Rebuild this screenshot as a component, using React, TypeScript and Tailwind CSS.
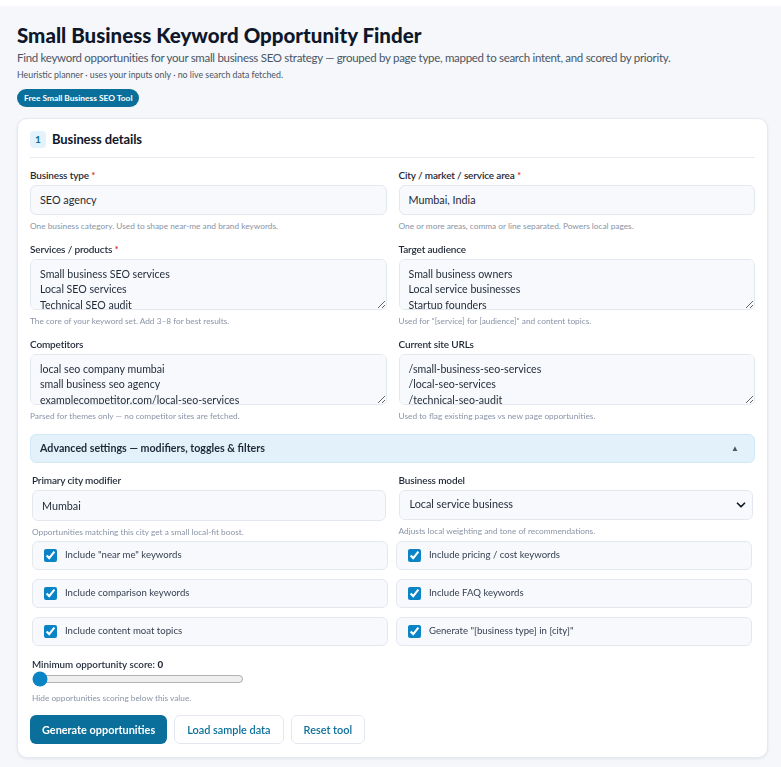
import { ChevronDown } from 'lucide-react'

const font = { fontFamily: 'Lato, "Noto Sans", Arial, sans-serif' }

function Label({ text, required }: { text: string; required?: boolean }) {
  return (
    <div className="text-[10px] font-semibold leading-[14px] tracking-[-0.15px] text-[#1f2937] mb-[3px]">
      {text}
      {required && <span className="text-[#dc2626]"> *</span>}
    </div>
  )
}

function Hint({ text }: { text: string }) {
  return <div className="text-[8.3px] leading-[12px] text-[#8a94a6] mt-[5px]">{text}</div>
}

function TextField({ label, value, hint, required }: { label: string; value: string; hint: string; required?: boolean }) {
  return (
    <div>
      <Label text={label} required={required} />
      <input
        readOnly
        value={value}
        className="w-full h-[30px] px-[9px] text-[10.8px] text-[#1f2937] bg-[#f7f9fc] border border-[#e3e8ef] rounded-[6px] outline-none"
      />
      <Hint text={hint} />
    </div>
  )
}

function Area({ label, lines, hint, required }: { label: string; lines: string[]; hint: string; required?: boolean }) {
  return (
    <div>
      <Label text={label} required={required} />
      <textarea
        readOnly
        value={lines.join('\n')}
        className="block w-full h-[51px] px-[9px] pt-[7px] text-[10.6px] leading-[15.5px] text-[#1f2937] bg-[#f7f9fc] border border-[#e3e8ef] rounded-[6px] outline-none overflow-y-scroll"
      />
      <Hint text={hint} />
    </div>
  )
}

function Check({ text }: { text: string }) {
  return (
    <label className="flex items-center h-[29px] px-[11px] bg-[#f7f9fc] border border-[#e3e8ef] rounded-[6px] gap-[8px]">
      <input type="checkbox" defaultChecked className="w-[13px] h-[13px] accent-[#0b84c6]" />
      <span className="text-[9.6px] text-[#374151]">{text}</span>
    </label>
  )
}

export default function App() {
  return (
    <div style={font} className="bg-white pt-[6px] min-h-[767px]">
      <div className="bg-[#f5f7fb] pl-[17px] pr-[13px] pt-[16px] pb-[10px] min-h-[761px]">
        <h1 className="text-[20.5px] font-black leading-[26px] text-[#0f172a]">
          Small Business Keyword Opportunity Finder
        </h1>
        <p className="text-[11.5px] leading-[17px] tracking-[-0.3px] text-[#4b5563] mt-[1px] whitespace-nowrap">
          Find keyword opportunities for your small business SEO strategy — grouped by page type, mapped to search intent, and scored by priority.
        </p>
        <p className="text-[8.8px] leading-[12px] text-[#4b5563] mt-[3px]">
          Heuristic planner · uses your inputs only · no live search data fetched.
        </p>
        <div className="mt-[8px] inline-flex items-center h-[18px] px-[7px] rounded-full bg-[#0b6f9b] text-white text-[8.4px] font-bold">
          Free Small Business SEO Tool
        </div>

        <div className="mt-[11px] bg-white border border-[#e5e9f0] rounded-[10px] shadow-[0_1px_3px_rgba(15,23,42,0.08)] px-[12px] pt-[11px] pb-[13px]">
          <div className="flex items-center gap-[6px] pb-[7px] border-b border-[#e5e9f0]">
            <span className="w-[16px] h-[17px] rounded-[4px] bg-[#e4f3fb] text-[#0b6f9b] text-[10px] font-bold flex items-center justify-center">1</span>
            <span className="text-[13px] font-bold tracking-[-0.1px] text-[#0f172a]">Business details</span>
          </div>

          <div className="grid grid-cols-2 gap-x-[12px] gap-y-[10px] mt-[10px]">
            <TextField label="Business type" required value="SEO agency" hint="One business category. Used to shape near-me and brand keywords." />
            <TextField label="City / market / service area" required value="Mumbai, India" hint="One or more areas, comma or line separated. Powers local pages." />
            <Area
              label="Services / products"
              required
              lines={['Small business SEO services', 'Local SEO services', 'Technical SEO audit', 'Content marketing', 'Google Business Profile optimization']}
              hint="The core of your keyword set. Add 3–8 for best results."
            />
            <Area
              label="Target audience"
              lines={['Small business owners', 'Local service businesses', 'Startup founders', 'Ecommerce stores']}
              hint={'Used for "[service] for [audience]" and content topics.'}
            />
            <Area
              label="Competitors"
              lines={['local seo company mumbai', 'small business seo agency', 'examplecompetitor.com/local-seo-services', 'seo consultant near me']}
              hint="Parsed for themes only — no competitor sites are fetched."
            />
            <Area
              label="Current site URLs"
              lines={['/small-business-seo-services', '/local-seo-services', '/technical-seo-audit', '/blog/local-seo-checklist']}
              hint="Used to flag existing pages vs new page opportunities."
            />
          </div>

          <div className="mt-[12px] h-[29px] flex items-center justify-between px-[9px] bg-[#e3f1fb] border border-[#d3e8f6] rounded-[6px]">
            <span className="text-[10.7px] font-bold text-[#1f2937]">Advanced settings — modifiers, toggles &amp; filters</span>
            <span className="text-[8px] text-[#4b5563] mr-[6px]">▲</span>
          </div>

          <div className="px-[2px] mt-[10px]">
            <div className="grid grid-cols-2 gap-x-[12px]">
              <div>
                <Label text="Primary city modifier" />
                <input
                  readOnly
                  value="Mumbai"
                  className="w-[354px] h-[31px] px-[9px] text-[10.8px] text-[#1f2937] bg-[#f7f9fc] border border-[#e3e8ef] rounded-[6px] outline-none"
                />
                <Hint text="Opportunities matching this city get a small local-fit boost." />
              </div>
              <div>
                <Label text="Business model" />
                <div className="relative w-[354px]">
                  <select
                    defaultValue="local"
                    className="appearance-none w-full h-[30px] px-[10px] text-[10.8px] text-[#1f2937] bg-[#f7f9fc] border border-[#e3e8ef] rounded-[6px] outline-none"
                  >
                    <option value="local">Local service business</option>
                  </select>
                  <ChevronDown size={14} strokeWidth={3} className="absolute right-[5px] top-[8px] text-[#111827] pointer-events-none" />
                </div>
                <Hint text="Adjusts local weighting and tone of recommendations." />
              </div>
            </div>

            <div className="grid grid-cols-2 gap-x-[8px] gap-y-[9px] mt-[3px] w-[720px]">
              <Check text={'Include "near me" keywords'} />
              <Check text="Include pricing / cost keywords" />
              <Check text="Include comparison keywords" />
              <Check text="Include FAQ keywords" />
              <Check text="Include content moat topics" />
              <Check text={'Generate "[business type] in [city]"'} />
            </div>

            <div className="mt-[11px]">
              <div className="text-[9.8px] font-semibold text-[#1f2937]">
                Minimum opportunity score: <span className="font-black">0</span>
              </div>
              <input type="range" min={0} max={100} defaultValue={0} className="block w-[212px] mt-[0px] accent-[#0b84c6]" />
              <Hint text="Hide opportunities scoring below this value." />
            </div>
          </div>

          <div className="flex gap-[7px] mt-[11px]">
            <button className="h-[29px] px-[12px] rounded-[6px] bg-[#0b6f9b] text-white text-[10.9px] font-bold">Generate opportunities</button>
            <button className="h-[29px] px-[12px] rounded-[6px] bg-white border border-[#e3e8ef] text-[#0b6f9b] text-[10.9px] font-semibold">Load sample data</button>
            <button className="h-[29px] px-[12px] rounded-[6px] bg-white border border-[#e3e8ef] text-[#0b6f9b] text-[10.9px] font-semibold">Reset tool</button>
          </div>
        </div>
      </div>
    </div>
  )
}
